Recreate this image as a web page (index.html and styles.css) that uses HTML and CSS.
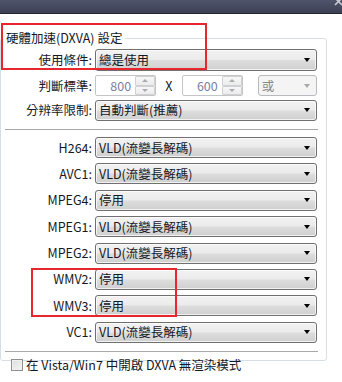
FILE: index.html
```html
<!DOCTYPE html>
<html>
<head>
<meta charset="utf-8">
<link rel="stylesheet" href="styles.css">
</head>
<body>
<div class="titlebar"><svg class="close" width="8" height="8" viewBox="0 0 8 8"><path d="M1 -2 L8 5 M8 -2 L1 5" stroke="#c8cad4" stroke-width="1.6" fill="none"/></svg></div>
<fieldset class="group">
  <legend class="legend">硬體加速(DXVA) 設定</legend>
  <div class="top-rows">
    <div class="label">使用條件:</div>
    <div class="combo combo-tall"><span class="val">總是使用</span><span class="arrow"></span></div>

    <div class="label">判斷標準:</div>
    <div class="size-row">
      <div class="spin"><span class="spin-val">800</span><div class="spin-btns"><div class="spin-btn"><span class="up"></span></div><div class="spin-btn"><span class="down"></span></div></div></div>
      <span class="times">X</span>
      <div class="spin"><span class="spin-val">600</span><div class="spin-btns"><div class="spin-btn"><span class="up"></span></div><div class="spin-btn"><span class="down"></span></div></div></div>
      <div class="combo combo-disabled"><span class="val">或</span><span class="arrow"></span></div>
    </div>

    <div class="label">分辨率限制:</div>
    <div class="combo"><span class="val">自動判斷(推薦)</span><span class="arrow"></span></div>
  </div>
  <div class="sep"></div>
  <div class="codec-rows">
    <div class="label">H264:</div>
    <div class="combo"><span class="val">VLD(流變長解碼)</span><span class="arrow"></span></div>
    <div class="label">AVC1:</div>
    <div class="combo"><span class="val">VLD(流變長解碼)</span><span class="arrow"></span></div>
    <div class="label">MPEG4:</div>
    <div class="combo"><span class="val">停用</span><span class="arrow"></span></div>
    <div class="label">MPEG1:</div>
    <div class="combo"><span class="val">VLD(流變長解碼)</span><span class="arrow"></span></div>
    <div class="label">MPEG2:</div>
    <div class="combo"><span class="val">VLD(流變長解碼)</span><span class="arrow"></span></div>
    <div class="label">WMV2:</div>
    <div class="combo"><span class="val">停用</span><span class="arrow"></span></div>
    <div class="label">WMV3:</div>
    <div class="combo"><span class="val">停用</span><span class="arrow"></span></div>
    <div class="label">VC1:</div>
    <div class="combo"><span class="val">VLD(流變長解碼)</span><span class="arrow"></span></div>
  </div>
  <div class="sep sep-bottom"></div>
  <div class="check-row"><span class="checkbox"></span><span class="check-text">在 Vista/Win7 中開啟 DXVA 無渲染模式</span></div>
</fieldset>
<div class="mark mark-1"></div>
<div class="mark mark-2"></div>
</body>
</html>
```
FILE: styles.css
```css
html, body {
  margin: 0;
  padding: 0;
  background: #ffffff;
  width: 342px;
  height: 382px;
  overflow: hidden;
  font-family: "Noto Sans CJK TC", "Noto Sans", sans-serif;
  font-size: 12.5px;
  color: #151925;
}
body { position: relative; }

.titlebar {
  height: 13px;
  background: linear-gradient(#50546b, #3d4155);
  border-bottom: 1px solid #23252f;
  position: relative;
}
.close {
  position: absolute;
  right: 0;
  top: 0;
}

.group {
  margin: 16px 0 0 0;
  padding: 3px 8px 0 0;
  width: 317px;
  height: 326px;
  border: 1px solid #d5dfe5;
  border-radius: 3px;
  box-sizing: content-box;
  min-width: 0;
}
.legend {
  margin-left: 2px;
  padding: 0 3px;
  line-height: 16px;
  height: 16px;
}

.top-rows, .codec-rows {
  display: grid;
  grid-template-columns: 91px 222px;
  column-gap: 3px;
  align-items: center;
}
.top-rows {
  grid-template-rows: 22px 21px 20px;
  row-gap: 4px;
}

.codec-rows {
  grid-auto-rows: 21px;
  row-gap: 5.4px;
}

.label {
  text-align: right;
  white-space: nowrap;
  line-height: 16px;
}

.combo {
  box-sizing: border-box;
  height: 21px;
  display: flex;
  align-items: center;
  justify-content: space-between;
  border: 1px solid #707070;
  border-radius: 3px;
  background: linear-gradient(#f2f2f2 0%, #ebebeb 48%, #dddddd 52%, #cfcfcf 100%);
  box-shadow: inset 0 0 0 1px rgba(255,255,255,0.7);
  padding: 0 6px 0 3px;
  white-space: nowrap;
}
.combo-tall { height: 22px; }
.val { line-height: 16px; }
.arrow {
  width: 0;
  height: 0;
  border-left: 3.5px solid transparent;
  border-right: 3.5px solid transparent;
  border-top: 4px solid #000000;
}

.size-row {
  display: flex;
  align-items: center;
  height: 21px;
}
.spin {
  box-sizing: border-box;
  width: 62px;
  height: 21px;
  border: 1px solid #c5c5c5;
  border-radius: 2px;
  background: #ffffff;
  display: flex;
  align-items: stretch;
}
.spin-val {
  flex: 1;
  text-align: right;
  color: #7a80a0;
  line-height: 19px;
  padding-right: 4px;
}
.spin-btns {
  width: 20px;
  display: flex;
  flex-direction: column;
}
.spin-btn {
  flex: 1;
  border: 1px solid #cfd1d4;
  border-radius: 1px;
  background: linear-gradient(#f7f7f7, #ececec);
  display: flex;
  align-items: center;
  justify-content: center;
  box-sizing: border-box;
}
.up {
  width: 0; height: 0;
  border-left: 3px solid transparent;
  border-right: 3px solid transparent;
  border-bottom: 3px solid #a9abae;
}
.down {
  width: 0; height: 0;
  border-left: 3px solid transparent;
  border-right: 3px solid transparent;
  border-top: 3px solid #a9abae;
}
.times {
  width: 26px;
  text-align: center;
  line-height: 16px;
}
.combo-disabled {
  width: 60px;
  margin-left: 15px;
  border-color: #b8babd;
  background: #f4f4f4;
  box-shadow: none;
  color: #8a8a8a;
}
.combo-disabled .arrow { border-top-color: #a8a8a8; }

.sep {
  margin: 9px 0 0 4px;
  width: 313px;
  border-top: 1px solid #a8a8a8;
  height: 0;
  margin-bottom: 7px;
}
.sep-bottom { margin-top: 8px; margin-bottom: 0; }

.check-row {
  display: flex;
  align-items: center;
  margin-top: 5px;
  padding-left: 10px;
  height: 16px;
}
.checkbox {
  box-sizing: border-box;
  width: 12px;
  height: 12px;
  border: 1px solid #8e8f8f;
  background: linear-gradient(135deg, #dcdcdc, #f6f6f6);
  box-shadow: inset 0 0 0 1px #f0f0f0;
  margin-right: 3px;
}
.check-text { line-height: 16px; white-space: nowrap; }

.mark {
  position: absolute;
  border: 2px solid #e8262d;
  box-sizing: border-box;
}
.mark-1 { left: 1px; top: 23px; width: 206px; height: 47px; }
.mark-2 { left: 31px; top: 268px; width: 146px; height: 49px; }
```
